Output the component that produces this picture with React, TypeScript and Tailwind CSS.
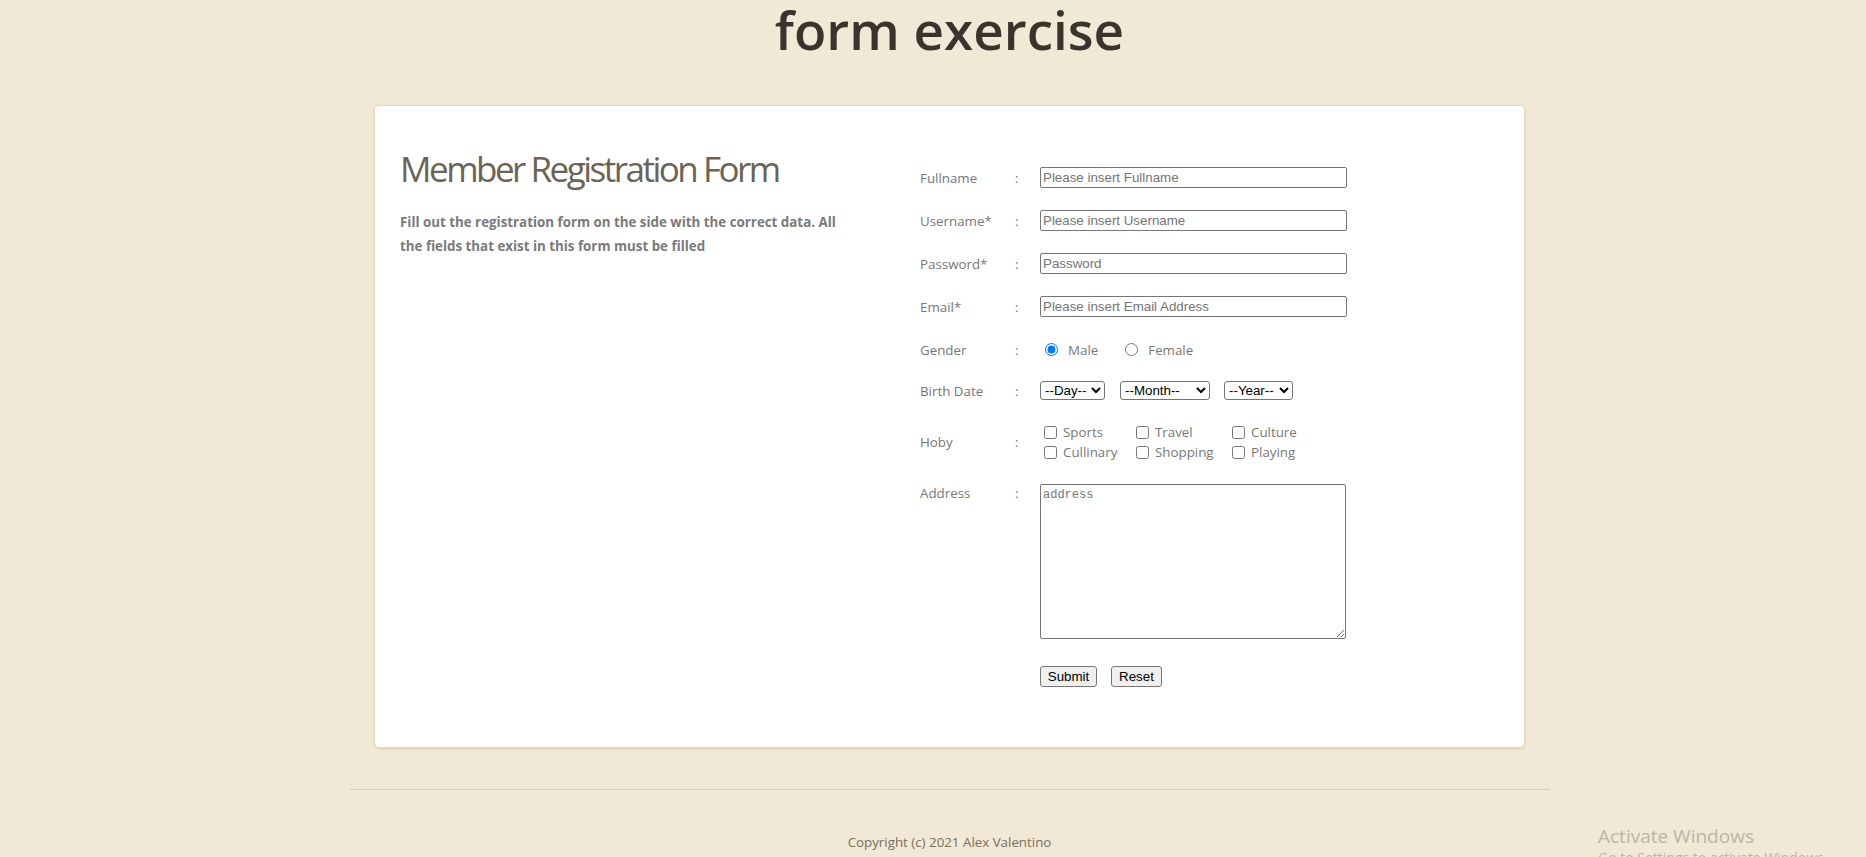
import React from "react";

const labelCls = "text-[13.33px] leading-[18px] text-[#777]";
const inputCls =
  "h-[21px] w-[307px] border border-[#767676] rounded-[2px] bg-white px-[2px] text-[13.33px] font-['Liberation_Sans',Arial,sans-serif] text-black placeholder:text-[#757575] outline-none";
const selectCls =
  "h-[19px] border border-[#767676] rounded-[3px] bg-white text-[13.33px] leading-[15px] font-['Liberation_Sans',Arial,sans-serif] text-black";
const btnCls =
  "h-[21px] border border-[#767676] rounded-[3px] bg-[#efefef] text-[13.33px] leading-[15px] font-['Liberation_Sans',Arial,sans-serif] text-black";

function Row({
  label,
  children,
  className = "",
  top = false,
}: {
  label: string;
  children: React.ReactNode;
  className?: string;
  top?: boolean;
}) {
  return (
    <div
      className={`grid grid-cols-[95px_25px_1fr] ${top ? "items-start" : "items-center"} ${className}`}
    >
      <span className={labelCls}>{label}</span>
      <span className={labelCls}>:</span>
      <div className="flex items-center">{children}</div>
    </div>
  );
}

function Check({ label }: { label: string }) {
  return (
    <label className="flex items-center h-[20px]">
      <input type="checkbox" className="ml-[4px] mr-[6px] w-[13px] h-[13px]" />
      <span className="text-[13.33px] leading-[18px] text-[#777]">{label}</span>
    </label>
  );
}

export default function App() {
  return (
    <div className="relative min-h-[857px] overflow-hidden bg-[#f1e8d5] pl-[33px] font-['Open_Sans',sans-serif]">
      <h1 className="pt-[3px] text-center text-[53px] leading-none font-semibold text-[#3d332c]">
        form exercise
      </h1>

      <div className="mx-auto mt-[49px] flex h-[643px] w-[1151px] items-start rounded-[5px] border border-[#e3d9bc] bg-white pl-[25px] shadow-[0_1px_2px_rgba(160,140,90,0.25)]">
        <div className="w-[520px] pt-[39px]">
          <h2 className="text-[35px] leading-[48px] font-normal tracking-[-2.5px] text-[#6b6454]">
            Member Registration Form
          </h2>
          <p className="mt-[17px] w-[452px] text-[13.33px] leading-[24px] font-bold text-[#7a7a7a]">
            Fill out the registration form on the side with the correct data. All the fields that
            exist in this form must be filled
          </p>
        </div>

        <form className="pt-[61px]" onSubmit={(e) => e.preventDefault()}>
          <Row label="Fullname">
            <input className={inputCls} placeholder="Please insert Fullname" />
          </Row>
          <Row label="Username*" className="mt-[22px]">
            <input className={inputCls} placeholder="Please insert Username" />
          </Row>
          <Row label="Password*" className="mt-[22px]">
            <input type="password" className={inputCls} placeholder="Password" />
          </Row>
          <Row label="Email*" className="mt-[22px]">
            <input type="email" className={inputCls} placeholder="Please insert Email Address" />
          </Row>
          <Row label="Gender" className="mt-[22px] h-[21px]">
            <label className="flex items-center">
              <input
                type="radio"
                name="gender"
                defaultChecked
                className="ml-[5px] mr-[10px] h-[13px] w-[13px]"
              />
              <span className="text-[13.33px] leading-[18px] text-[#777]">Male</span>
            </label>
            <label className="ml-[27px] flex items-center">
              <input type="radio" name="gender" className="mr-[10px] h-[13px] w-[13px]" />
              <span className="text-[13.33px] leading-[18px] text-[#777]">Female</span>
            </label>
          </Row>
          <Row label="Birth Date" className="mt-[21px]">
            <div className="flex items-center">
              <select className={`${selectCls} w-[65px]`} defaultValue="">
                <option value="">--Day--</option>
              </select>
              <select className={`${selectCls} ml-[15px] w-[90px]`} defaultValue="">
                <option value="">--Month--</option>
                <option value="9">September</option>
              </select>
              <select className={`${selectCls} ml-[14px] w-[69px]`} defaultValue="">
                <option value="">--Year--</option>
              </select>
            </div>
          </Row>
          <Row label="Hoby" className="mt-[22px]">
            <div className="grid grid-cols-[92px_96px_auto]">
              <Check label="Sports" />
              <Check label="Travel" />
              <Check label="Culture" />
              <Check label="Cullinary" />
              <Check label="Shopping" />
              <Check label="Playing" />
            </div>
          </Row>
          <Row label="Address" className="mt-[22px]" top>
            <textarea
              className="h-[155px] w-[306px] resize border border-[#767676] rounded-[2px] bg-white px-[2px] pt-[2px] text-[12px] leading-[16px] font-['Liberation_Mono','DejaVu_Sans_Mono',monospace] placeholder:text-[#757575] outline-none"
              placeholder="address"
            />
          </Row>
          <div className="mt-[27px] grid grid-cols-[95px_25px_1fr]">
            <span />
            <span />
            <div className="flex gap-[14px]">
              <button type="submit" className={`${btnCls} w-[57px]`}>
                Submit
              </button>
              <button type="reset" className={`${btnCls} w-[51px]`}>
                Reset
              </button>
            </div>
          </div>
        </form>
      </div>

      <hr className="mx-auto mt-[41px] w-[1200px] border-0 border-t border-[#d9d0b2]" />

      <p className="mt-[43px] text-center text-[13.33px] leading-[18px] text-[#77705f]">
        Copyright (c) 2021 Alex Valentino
      </p>

      <div className="pointer-events-none absolute left-[1598px] top-[824px] text-[#bcb6a8]">
        <div className="text-[19px] leading-[24px]">Activate Windows</div>
        <div className="text-[14px] leading-[20px]">Go to Settings to activate Windows.</div>
      </div>
    </div>
  );
}
